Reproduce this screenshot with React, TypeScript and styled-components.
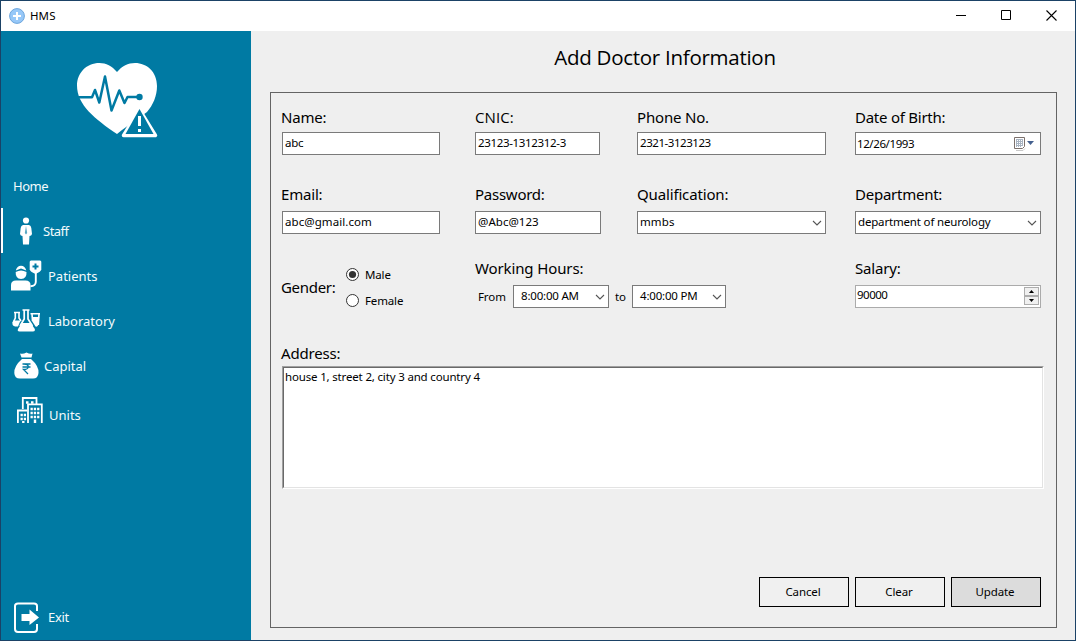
import React from 'react';
import styled, { createGlobalStyle } from 'styled-components';

const BLUE = '#007aa3';

const GlobalStyle = createGlobalStyle`
  * { box-sizing: border-box; }
  body { margin: 0; background: #efefef; font-family: "Noto Sans", "Open Sans", sans-serif; color: #000; }
`;

const Window = styled.div`
  width: 1076px;
  height: 641px;
  display: flex;
  flex-direction: column;
  border: 1px solid #1b4266;
  background: #efefef;
  overflow: hidden;
`;

const TitleBar = styled.header`
  flex: 0 0 30px;
  display: flex;
  align-items: center;
  background: #fff;
  padding: 0 0 0 8px;
`;

const AppName = styled.span`
  flex: 1;
  margin-left: 5px;
  font-size: 11.5px;
  line-height: 16px;
  letter-spacing: 0.1px;
`;

const WindowButton = styled.button<{ $w?: number }>`
  width: ${p => p.$w ?? 45}px;
  height: 30px;
  display: flex;
  align-items: center;
  justify-content: center;
  border: 0;
  padding: 0 2px 2px 0;
  background: none;
`;

const Body = styled.div`
  flex: 1;
  display: flex;
  min-height: 0;
`;

const Sidebar = styled.nav`
  width: 250px;
  display: flex;
  flex-direction: column;
  background: ${BLUE};
  color: #f4fafc;
`;

const LogoBox = styled.div`
  height: 132px;
  padding: 32px 0 0 76px;
`;

const MenuItem = styled.a<{ $active?: boolean; $inset: number; $gap?: number; $top?: number; $track?: number }>`
  display: flex;
  align-items: center;
  height: 45px;
  margin-top: ${p => p.$top ?? 0}px;
  border-left: 2px solid ${p => (p.$active ? '#fff' : 'transparent')};
  padding-left: ${p => p.$inset}px;
  gap: ${p => p.$gap ?? 0}px;
  font-size: 13px;
  line-height: 18px;
  letter-spacing: ${p => p.$track ?? 0}px;
`;

const ExitItem = styled(MenuItem)`
  margin: auto 0 1px;
`;

const Content = styled.main`
  flex: 1;
  padding: 11px 18px 0 19px;
`;

const Heading = styled.h1`
  margin: 0;
  height: 50px;
  padding-left: 3px;
  text-align: center;
  font-family: "Open Sans", sans-serif;
  font-weight: 400;
  font-size: 20.5px;
  line-height: 31px;
  letter-spacing: -0.27px;
`;

const Panel = styled.section`
  width: 787px;
  height: 536px;
  border: 1px solid #646464;
  padding: 14px 13px 20px 11px;
  display: flex;
  flex-direction: column;
`;

const FieldGrid = styled.div`
  display: grid;
  grid-template-columns: 193px 162px 218px 186px;
  grid-template-rows: 77px 74px 83px;
`;

const Field = styled.div`
  display: flex;
  flex-direction: column;
  align-items: flex-start;
`;

const Label = styled.label<{ $plainI?: boolean; $track?: number; $h?: number; $shift?: number }>`
  height: ${p => p.$h ?? 25}px;
  margin-left: ${p => p.$shift ?? 0}px;
  font-family: ${p => (p.$plainI ? '"Open Sans"' : '"Noto Sans"')}, sans-serif;
  font-size: 15px;
  line-height: 21px;
  letter-spacing: ${p => p.$track ?? -0.18}px;
  white-space: nowrap;
`;

const Box = styled.div<{ $w: number; $border?: string; $pad?: number; $drop?: number; $track?: number }>`
  width: ${p => p.$w}px;
  height: 23px;
  display: flex;
  justify-content: space-between;
  border: 1px solid ${p => p.$border ?? '#7a7a7a'};
  background: #fff;
  padding: ${p => p.$drop ?? 2}px 0 0 ${p => p.$pad ?? 2}px;
  font-size: 11.5px;
  line-height: 16px;
  letter-spacing: ${p => p.$track ?? -0.2}px;
  white-space: nowrap;
`;

const GenderField = styled.div`
  display: flex;
  padding-top: 8px;
`;

const GenderLabel = styled(Label)`
  padding-top: 11px;
  width: 65px;
`;

const AddressLabel = styled(Label)`
  padding-top: 2px;
`;

const RadioGroup = styled.div`
  display: flex;
  flex-direction: column;
  gap: 10px;
`;

const RadioOption = styled.label`
  display: flex;
  align-items: center;
  gap: 6px;
  height: 16px;
  font-size: 11.5px;
  letter-spacing: -0.15px;
`;

const HoursRow = styled.div`
  display: flex;
  align-items: center;
  height: 23px;
  padding-left: 3px;
  font-size: 11.5px;
  letter-spacing: -0.1px;
`;

const HoursWord = styled.span<{ $w: number; $pad?: number }>`
  width: ${p => p.$w}px;
  padding-left: ${p => p.$pad ?? 0}px;
`;

const ChevronSlot = styled.svg`
  margin: 4px 3px 0 0;
  flex: none;
`;

const CalendarSlot = styled.svg`
  margin-right: 4px;
  flex: none;
`;

const Spinner = styled.div`
  width: 15px;
  height: 19px;
  margin-right: 1px;
  display: grid;
  grid-template-rows: 9px 9px;
`;

const SpinButton = styled.div`
  display: flex;
  align-items: center;
  justify-content: center;
  border: 1px solid #adadad;
  background: #f0f0f0;
`;

const AddressArea = styled.div`
  width: 762px;
  height: 123px;
  border: 1px solid;
  border-color: #a0a0a0 #fff #fff #a0a0a0;
  display: flex;
`;

const AddressText = styled.div`
  flex: 1;
  border: 1px solid;
  border-color: #696969 #e3e3e3 #e3e3e3 #696969;
  background: #fff;
  padding: 1px 1px;
  font-size: 11.5px;
  line-height: 16px;
  letter-spacing: -0.17px;
`;

const Actions = styled.div`
  margin-top: auto;
  display: flex;
  justify-content: flex-end;
  gap: 6px;
  padding-right: 2px;
`;

const ActionButton = styled.button<{ $filled?: boolean }>`
  width: 90px;
  height: 30px;
  border: 1px solid #000;
  border-radius: 0;
  padding: 0 2px 1px 0;
  background: ${p => (p.$filled ? '#dcdcdc' : '#f0f0f0')};
  color: #000;
  font-family: "Noto Sans", sans-serif;
  font-size: 11.5px;
  line-height: 16px;
  letter-spacing: -0.1px;
`;

const UnitsSvg = styled.svg`
  margin-bottom: 10px;
`;

const ExitSvg = styled.svg`
  margin-top: 2px;
`;

const Chevron = () => (
  <ChevronSlot width="10" height="10" viewBox="0 0 10 10" fill="none" stroke="#555" strokeWidth="1.1">
    <path d="M1 3 L5 7 L9 3" />
  </ChevronSlot>
);

const CalendarIcon = () => (
  <CalendarSlot width="23" height="17" viewBox="0 0 23 17">
    <path d="M3 14.500 h7 l2-2" stroke="#c9c9c9" fill="none" />
    <path d="M1.500 1.500 h10 v9 l-2 2 h-8 z" fill="#fff" stroke="#7b706c" />
    <path d="M3 3h7v1H3zM3 3h1v8H3zM5 3h1v8H5zM7 3h1v8H7zM9 3h1v7H9zM3 5h7v1H3zM3 7h7v1H3zM3 9h7v1H3z" fill="#a9b4c2" />
    <path d="M14 5 h7 l-3.500 4 z" fill="#44608f" />
  </CalendarSlot>
);

const Radio = ({ on }: { on?: boolean }) => (
  <svg width="13" height="13" viewBox="0 0 13 13">
    <circle cx="6.5" cy="6.5" r="6" fill="#fff" stroke="#333" />
    {on && <circle cx="6.5" cy="6.5" r="3.6" fill="#333" />}
  </svg>
);

const PlusBadge = () => (
  <svg width="16" height="16" viewBox="0 0 16 16">
    <circle cx="8" cy="8" r="7.4" fill="#97c8f8" stroke="#6ea6dc" strokeWidth="1" />
    <path d="M8 4v8M4 8h8" stroke="#fff" strokeWidth="2" />
  </svg>
);

const HeartLogo = () => (
  <svg width="81" height="75" viewBox="0 0 81 75">
    <path d="M40 9 C35 3 29 0 22.500 0 C9.500 0 0 10 0 22.500 C0 42 18 56 40 71 L45 67 L70 49 C76 42 80 33 80 23 C80 9 70 0 58 0 C51 0 45 3 40 9 Z" fill="#fff" />
    <path d="M1 34.300 H15 L18 27 L22.300 39.500 L28 13.500 L34.500 47.500 L42.300 27.500 L47.500 40 L50.500 34 H62" fill="none" stroke={BLUE} strokeWidth="2.500" strokeLinejoin="round" />
    <circle cx="62.500" cy="34" r="3.200" fill={BLUE} />
    <path d="M62.500 46.500 L78.500 72.500 H46.500 Z" fill="#fff" stroke="#fff" strokeWidth="3.500" strokeLinejoin="round" />
    <path d="M62.500 46 L76.500 71 H48.500 Z" fill={BLUE} />
    <path d="M61 53h3v10h-3zM61 66h3v3h-3z" fill="#fff" />
  </svg>
);

const StaffIcon = () => (
  <svg width="12" height="28" viewBox="0 0 12 28" fill="#fff">
    <circle cx="6" cy="3.500" r="3.100" />
    <path d="M3 8 H9 Q11 8.500 11.300 11 L12 17 Q11.500 19 9.500 19 L9 27.500 H3 L2.500 19 Q0.500 19 0 17 L0.700 11 Q1 8.500 3 8Z" />
    <path d="M6 9 L7.200 16 L6 17.500 L4.800 16Z" fill={BLUE} opacity=".65" />
  </svg>
);

const PatientsIcon = () => (
  <svg width="31" height="31" viewBox="0 0 31 31" fill="#fff">
    <path d="M0 30.500 V25 Q0 20.500 5 20.500 H14.500 Q19.500 20.500 19.500 25 V30.500Z" />
    <path d="M4.800 10.500 Q6 5.700 10 5.700 Q14 5.700 15.300 10.500 L10 8.500Z" />
    <path d="M4.700 12 Q10 9 15.500 12 Q16 18.500 10 19 Q4.300 18.500 4.700 12Z" />
    <path d="M20 0.500 H29 Q30.300 0.500 30.300 2 V9.500 Q30 11.500 24.500 14 Q19 11.500 18.700 9.500 V2 Q18.700 0.500 20 0.500Z" />
    <path d="M24.500 3.500v6M21.500 6.500h6" stroke={BLUE} strokeWidth="2" />
    <path d="M24.800 13 V22 Q24.500 26 19.500 26.200" fill="none" stroke="#fff" strokeWidth="1.900" />
  </svg>
);

const LabIcon = () => (
  <svg width="29" height="23" viewBox="0 0 29 23" fill="#fff">
    <path d="M2 3.500 H8 M3.300 3.500 V9 L1 14 M7 3.500 V9 L9 12" fill="none" stroke="#fff" strokeWidth="1.600" />
    <path d="M1.500 11.500 H8.500 L6 17.500 H3 Q-0.500 17 0.700 13.500Z" />
    <path d="M10.500 1 H17.500 M12.200 1 V10 L8 17 M16 1 V10 L20.500 17" fill="none" stroke="#fff" strokeWidth="1.700" />
    <path d="M9.800 14 H18.800 L22.800 20 Q23.300 22.500 21 22.500 H7.500 Q5 22.500 6 20Z" />
    <path d="M18.500 4.700 H28 M20 5 L20.500 12 M27 5 L26.300 16" fill="none" stroke="#fff" strokeWidth="1.600" />
    <path d="M20 8 H27.300 L26 16.500 Q25.500 18 23.500 17.500 L20 12Z" />
  </svg>
);

const CapitalIcon = () => (
  <svg width="25" height="27" viewBox="0 0 25 27" fill="#fff">
    <path d="M6 1.500 Q9 2.500 12.500 0.500 Q16 2.500 18.500 1.500 L17.500 5.500 H7.500Z" />
    <path d="M8 7 H17 Q25 14 24.500 21 Q24 26.500 19 26.500 H6 Q0.500 26.500 0.300 21 Q0 14 8 7Z" />
    <path d="M8.500 12 H16.500 M8.500 15 H16.500 M10 12 Q14.300 12 14.300 15 Q14 17.500 9.500 17.500 L14 22" fill="none" stroke={BLUE} strokeWidth="1.300" />
  </svg>
);

const UnitsIcon = () => (
  <UnitsSvg width="26" height="26" viewBox="0 0 26 26" fill="none" stroke="#fff" strokeWidth="1.800">
    <path d="M5.800 12 V1 H19.500 V6.500 M0.900 26 V13.500 H10 M11 26 V7.300 H24.800 V26" />
    <path d="M9 5.500h2.500M14 5.500h2.500" strokeWidth="2.500" />
    <path d="M13.500 12h9M13.500 16h9M13.500 20h9" strokeWidth="2.500" strokeDasharray="2.300 1" />
    <path d="M3.500 18h5.500M3.500 22h5.500" strokeWidth="2.500" strokeDasharray="2.300 1" />
    <path d="M18 22.500v3.500M6.300 24v2" strokeWidth="2.400" />
  </UnitsSvg>
);

const ExitIcon = () => (
  <ExitSvg width="26" height="31" viewBox="0 0 26 31" fill="none" stroke="#fff" strokeWidth="2">
    <path d="M23 9 V4 Q23 1.500 20 1.500 H4 Q1 1.500 1 4 V27 Q1 30 4 30 H20 Q23 30 23 27 V22" />
    <path d="M7.500 12 H15.500 V7.500 L25 15.500 L15.500 23 V19 H7.500Z" fill="#fff" stroke="none" />
  </ExitSvg>
);

export default function App() {
  return (
    <>
      <GlobalStyle />
      <Window>
        <TitleBar>
          <PlusBadge />
          <AppName>HMS</AppName>
          <WindowButton aria-label="Minimize">
            <svg width="10" height="10" stroke="#000"><path d="M0 5.500h10" /></svg>
          </WindowButton>
          <WindowButton aria-label="Maximize">
            <svg width="10" height="10" stroke="#000" fill="none"><path d="M.5 .5h9v9h-9z" /></svg>
          </WindowButton>
          <WindowButton aria-label="Close" $w={46}>
            <svg width="11" height="11" stroke="#000" strokeWidth="1.100"><path d="M.5 .5L10.500 10.500M10.500 .5L.5 10.500" /></svg>
          </WindowButton>
        </TitleBar>
        <Body>
          <Sidebar>
            <LogoBox><HeartLogo /></LogoBox>
            <MenuItem $inset={10} $track={-0.5}>Home</MenuItem>
            <MenuItem $inset={17} $gap={11} $track={-0.5} $active><StaffIcon />Staff</MenuItem>
            <MenuItem $inset={8} $gap={6}><PatientsIcon />Patients</MenuItem>
            <MenuItem $inset={9} $gap={7}><LabIcon />Laboratory</MenuItem>
            <MenuItem $inset={11} $gap={5}><CapitalIcon />Capital</MenuItem>
            <MenuItem $inset={14} $gap={6} $top={4}><UnitsIcon />Units</MenuItem>
            <ExitItem $inset={11} $gap={8} $track={-0.3}><ExitIcon />Exit</ExitItem>
          </Sidebar>
          <Content>
            <Heading>Add Doctor Information</Heading>
            <Panel>
              <FieldGrid>
                <Field><Label $shift={-1}>Name:</Label><Box $w={158}>abc</Box></Field>
                <Field><Label $plainI $track={0.1}>CNIC:</Label><Box $w={125} $track={-0.33}>23123-1312312-3</Box></Field>
                <Field><Label>Phone No.</Label><Box $w={189} $track={-0.45}>2321-3123123</Box></Field>
                <Field>
                  <Label $track={-0.25}>Date of Birth:</Label>
                  <Box $w={186} $drop={3} $pad={1} $track={-0.4}>12/26/1993<CalendarIcon /></Box>
                </Field>
                <Field><Label $h={27} $shift={-1}>Email:</Label><Box $w={158} $track={0.08}>abc@gmail.com</Box></Field>
                <Field><Label $h={27} $track={-0.25}>Password:</Label><Box $w={126} $track={0.05}>@Abc@123</Box></Field>
                <Field><Label $h={27} $track={-0.15}>Qualification:</Label><Box $w={189} $track={0.1}>mmbs<Chevron /></Box></Field>
                <Field><Label $h={27} $track={-0.25}>Department:</Label><Box $w={186} $track={-0.17}>department of neurology<Chevron /></Box></Field>
                <GenderField>
                  <GenderLabel $shift={-1} $track={-0.3}>Gender:</GenderLabel>
                  <RadioGroup>
                    <RadioOption><Radio on />Male</RadioOption>
                    <RadioOption><Radio />Female</RadioOption>
                  </RadioGroup>
                </GenderField>
                <Field>
                  <Label $h={27} $track={-0.12}>Working Hours:</Label>
                  <HoursRow>
                    <HoursWord $w={35}>From</HoursWord>
                    <Box $w={96} $pad={7}>8:00:00 AM<Chevron /></Box>
                    <HoursWord $w={23} $pad={6}>to</HoursWord>
                    <Box $w={94} $pad={7}>4:00:00 PM<Chevron /></Box>
                  </HoursRow>
                </Field>
                <div />
                <Field>
                  <Label $h={27}>Salary:</Label>
                  <Box $w={186} $border="#ababab" $drop={1} $pad={1} $track={-0.5}>
                    90000
                    <Spinner>
                      <SpinButton><svg width="5" height="3"><path d="M0 3h5L2.500 0z" /></svg></SpinButton>
                      <SpinButton><svg width="5" height="3"><path d="M0 0h5L2.500 3z" /></svg></SpinButton>
                    </Spinner>
                  </Box>
                </Field>
              </FieldGrid>
              <AddressLabel $shift={-1}>Address:</AddressLabel>
              <AddressArea><AddressText>house 1, street 2, city 3 and country 4</AddressText></AddressArea>
              <Actions>
                <ActionButton>Cancel</ActionButton>
                <ActionButton>Clear</ActionButton>
                <ActionButton $filled>Update</ActionButton>
              </Actions>
            </Panel>
          </Content>
        </Body>
      </Window>
    </>
  );
}
